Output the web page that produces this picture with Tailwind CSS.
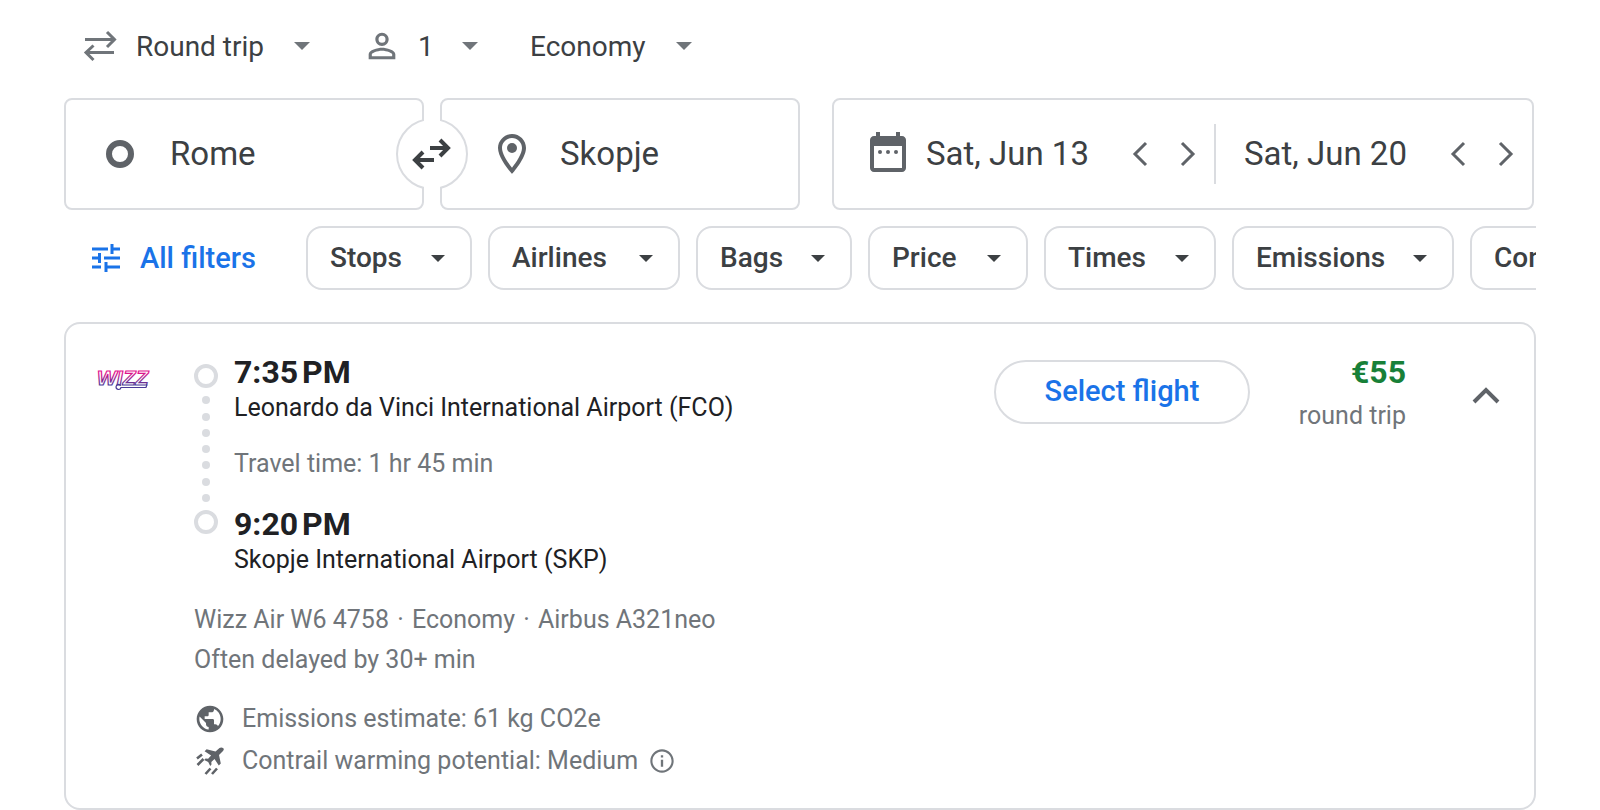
<!DOCTYPE html>
<html lang="en">
<head>
<meta charset="utf-8">
<meta name="viewport" content="width=device-width, initial-scale=1">
<title>Flights from Rome to Skopje</title>
<script src="https://cdn.jsdelivr.net/npm/@tailwindcss/browser@4"></script>
</head>
<body class="bg-white font-['Roboto',sans-serif] text-[#3c4043]">
<main class="px-16 pt-[22px]">
  <form>
    <div class="flex h-12 items-center pl-4 text-[28px] leading-12">
      <label for="trip" aria-label="Trip type" class="mr-4">
        <svg class="size-10" viewBox="0 0 40 40" fill="none" stroke="#70757a" stroke-width="3"><path d="M5 13.500H34M27 6l7.500 7.500L27 21M34 26.500H6M13.500 19.500L6 26.500l7.500 7.500"/></svg>
      </label>
      <div class="relative mr-[52px] w-[174px]">
        <select id="trip" class="block w-full appearance-none pt-0.5 outline-none"><option>Round trip</option><option>One way</option></select>
        <svg class="pointer-events-none absolute top-[21px] right-0 h-2 w-4" viewBox="0 0 16 8" fill="#70757a"><path d="M0 0h16L8 8z"/></svg>
      </div>
      <label for="passengers" aria-label="Passengers" class="mr-4">
        <svg class="size-10" viewBox="0 0 24 24" fill="#70757a"><path d="M12 5.900a2.100 2.100 0 1 1 0 4.200 2.100 2.100 0 0 1 0-4.200m0 9c2.970 0 6.100 1.460 6.100 2.100v1.100H5.900V17c0-.64 3.130-2.100 6.100-2.100M12 4C9.790 4 8 5.790 8 8s1.790 4 4 4 4-1.790 4-4-1.790-4-4-4m0 9c-2.670 0-8 1.340-8 4v3h16v-3c0-2.660-5.330-4-8-4"/></svg>
      </label>
      <div class="relative mr-[52px] w-[60px]">
        <select id="passengers" class="block w-full appearance-none pt-0.5 outline-none"><option>1</option><option>2</option></select>
        <svg class="pointer-events-none absolute top-[21px] right-0 h-2 w-4" viewBox="0 0 16 8" fill="#70757a"><path d="M0 0h16L8 8z"/></svg>
      </div>
      <div class="relative w-[162px]">
        <select aria-label="Seating class" class="block w-full appearance-none pt-0.5 outline-none"><option>Economy</option><option>Business</option></select>
        <svg class="pointer-events-none absolute top-[21px] right-0 h-2 w-4" viewBox="0 0 16 8" fill="#70757a"><path d="M0 0h16L8 8z"/></svg>
      </div>
    </div>

    <div class="mt-7 grid grid-cols-[736fr_702fr] gap-8 pr-0.5 text-[33px]">
      <div class="relative grid grid-cols-2 gap-4">
        <div class="flex h-28 items-center rounded-lg border-2 border-[#dadce0] pl-10">
          <span class="size-7 shrink-0 rounded-full border-[6px] border-[#5f6368]"></span>
          <input aria-label="Where from?" value="Rome" class="ml-9 w-full min-w-0 pr-10 outline-none">
        </div>
        <div class="flex h-28 items-center rounded-lg border-2 border-[#dadce0] pl-[46px]">
          <svg class="size-12 shrink-0" viewBox="0 0 24 24" fill="#5f6368"><path d="M12 2C8.130 2 5 5.130 5 9c0 5.250 7 13 7 13s7-7.750 7-13c0-3.870-3.130-7-7-7M7 9c0-2.760 2.240-5 5-5s5 2.240 5 5c0 2.880-2.880 7.190-5 9.880C9.920 16.210 7 11.850 7 9"/><circle cx="12" cy="9" r="2.500"/></svg>
          <input aria-label="Where to?" value="Skopje" class="ml-6 w-full min-w-0 pr-4 outline-none">
        </div>
        <button type="button" aria-label="Swap origin and destination" class="absolute top-1/2 left-1/2 flex size-[72px] -translate-1/2 items-center justify-center rounded-full border-2 border-[#dadce0] bg-white before:absolute before:inset-y-[-2px] before:left-[26px] before:w-4 before:bg-white">
          <svg class="relative size-12 shrink-0" viewBox="0 0 48 48" fill="none" stroke="#3c4043" stroke-width="4"><path d="M22 18h18M32 10l8 8-8 8M26 30H7M15 22l-8 8 8 8"/></svg>
        </button>
      </div>

      <div class="grid h-28 grid-cols-[380fr_318fr] rounded-lg border-2 border-[#dadce0]">
        <div class="flex items-center pl-[30px]">
          <svg class="mb-1 size-12 shrink-0" viewBox="0 0 24 24" fill="#5f6368"><path fill-rule="evenodd" d="M19 4h-1V2h-2v2H8V2H6v2H5c-1.100 0-2 .9-2 2v14c0 1.100.9 2 2 2h14c1.100 0 2-.9 2-2V6c0-1.100-.9-2-2-2M5 9h14v11H5z"/><circle cx="8" cy="12" r="1"/><circle cx="12" cy="12" r="1"/><circle cx="16" cy="12" r="1"/></svg>
          <input aria-label="Departure" value="Sat, Jun 13" class="ml-3.5 w-full min-w-0 outline-none">
          <button type="button" aria-label="Earlier departure" class="flex size-12 shrink-0 items-center justify-center"><svg class="size-7" viewBox="0 0 28 28" fill="none" stroke="#5f6368" stroke-width="3"><path d="M20 3L9 14l11 11"/></svg></button>
          <button type="button" aria-label="Later departure" class="mr-0.5 flex size-12 shrink-0 items-center justify-center"><svg class="size-7" viewBox="0 0 28 28" fill="none" stroke="#5f6368" stroke-width="3"><path d="M8 3l11 11L8 25"/></svg></button>
        </div>
        <div class="flex items-center pr-0.5">
          <span class="h-15 w-0.5 shrink-0 bg-[#dadce0]"></span>
          <input aria-label="Return" value="Sat, Jun 20" class="ml-7 w-full min-w-0 outline-none">
          <button type="button" aria-label="Earlier return" class="flex size-12 shrink-0 items-center justify-center"><svg class="size-7" viewBox="0 0 28 28" fill="none" stroke="#5f6368" stroke-width="3"><path d="M20 3L9 14l11 11"/></svg></button>
          <button type="button" aria-label="Later return" class="flex size-12 shrink-0 items-center justify-center"><svg class="size-7" viewBox="0 0 28 28" fill="none" stroke="#5f6368" stroke-width="3"><path d="M8 3l11 11L8 25"/></svg></button>
        </div>
      </div>
    </div>
  </form>

  <div class="mt-4 flex gap-4 overflow-hidden text-[28px] leading-10 font-medium">
    <button class="flex h-16 w-[226px] shrink-0 items-center gap-4 pl-6 text-[29px] text-[#1a73e8]">
      <svg class="size-9" viewBox="0 0 36 36" fill="none" stroke="#1a73e8" stroke-width="3"><path d="M4 9h16M24 9h8M24 4v10M4 18h8M11.500 13v10M16 18h16M4 27h9M18 22v10M18 27h14"/></svg>
      All filters
    </button>
    <button class="flex h-16 w-[166px] shrink-0 items-center justify-between rounded-2xl border-2 border-[#dadce0] pr-[25px] pl-[22px]">Stops<svg class="h-[7px] w-3.5" viewBox="0 0 14 7" fill="#3c4043"><path d="M0 0h14L7 7z"/></svg></button>
    <button class="flex h-16 w-[192px] shrink-0 items-center justify-between rounded-2xl border-2 border-[#dadce0] pr-[25px] pl-[22px]">Airlines<svg class="h-[7px] w-3.5" viewBox="0 0 14 7" fill="#3c4043"><path d="M0 0h14L7 7z"/></svg></button>
    <button class="flex h-16 w-[156px] shrink-0 items-center justify-between rounded-2xl border-2 border-[#dadce0] pr-[25px] pl-[22px]">Bags<svg class="h-[7px] w-3.5" viewBox="0 0 14 7" fill="#3c4043"><path d="M0 0h14L7 7z"/></svg></button>
    <button class="flex h-16 w-[160px] shrink-0 items-center justify-between rounded-2xl border-2 border-[#dadce0] pr-[25px] pl-[22px]">Price<svg class="h-[7px] w-3.5" viewBox="0 0 14 7" fill="#3c4043"><path d="M0 0h14L7 7z"/></svg></button>
    <button class="flex h-16 w-[172px] shrink-0 items-center justify-between rounded-2xl border-2 border-[#dadce0] pr-[25px] pl-[22px]">Times<svg class="h-[7px] w-3.5" viewBox="0 0 14 7" fill="#3c4043"><path d="M0 0h14L7 7z"/></svg></button>
    <button class="flex h-16 w-[222px] shrink-0 items-center justify-between rounded-2xl border-2 border-[#dadce0] pr-[25px] pl-[22px]">Emissions<svg class="h-[7px] w-3.5" viewBox="0 0 14 7" fill="#3c4043"><path d="M0 0h14L7 7z"/></svg></button>
    <button class="flex h-16 w-[320px] shrink-0 items-center justify-between rounded-2xl border-2 border-[#dadce0] pr-[25px] pl-[22px]">Connecting airports<svg class="h-[7px] w-3.5" viewBox="0 0 14 7" fill="#3c4043"><path d="M0 0h14L7 7z"/></svg></button>
  </div>

  <article class="mt-8 flex items-start rounded-2xl border-2 border-[#dadce0] pt-7 pb-[26px] pl-[30px] text-[25px] text-[#70757a]">
    <svg class="mt-2.5 h-8 w-14 shrink-0" viewBox="0 0 56 32" role="img" aria-label="Wizz Air">
      <defs><linearGradient id="wizz" gradientUnits="userSpaceOnUse" x1="0" y1="4" x2="0" y2="28"><stop offset=".3" stop-color="#e0148c"/><stop offset=".85" stop-color="#3a3a96"/></linearGradient></defs>
      <text x="1" y="23" font-family="Liberation Sans" font-size="21" font-weight="700" font-style="italic" fill="#fff" stroke="url(#wizz)" stroke-width="1.200">WIZZ</text>
      <path d="M25 23.500l-2-1a2.500 2.500 0 1 0 2 3h25l1-3" fill="none" stroke="#4a3a96" stroke-width="1.200"/>
    </svg>
    <div class="ml-[42px] min-w-0 flex-1">
      <div class="flex gap-4">
        <div class="flex flex-col items-center justify-between pt-3 pb-[42px]">
          <span class="size-6 rounded-full border-4 border-[#dadce0]"></span>
          <span class="size-2 rounded-full bg-[#dadce0]"></span>
          <span class="size-2 rounded-full bg-[#dadce0]"></span>
          <span class="size-2 rounded-full bg-[#dadce0]"></span>
          <span class="size-2 rounded-full bg-[#dadce0]"></span>
          <span class="size-2 rounded-full bg-[#dadce0]"></span>
          <span class="size-2 rounded-full bg-[#dadce0]"></span>
          <span class="size-2 rounded-full bg-[#dadce0]"></span>
          <span class="size-6 rounded-full border-4 border-[#dadce0]"></span>
        </div>
        <div class="text-[#202124]">
          <h2 class="text-[32px] leading-10 font-bold">7:35&#8239;PM</h2>
          <p class="leading-8">Leonardo da Vinci International Airport (FCO)</p>
          <p class="my-6 leading-8 text-[#70757a]">Travel time: 1 hr 45 min</p>
          <h2 class="text-[32px] leading-10 font-bold">9:20&#8239;PM</h2>
          <p class="leading-8">Skopje International Airport (SKP)</p>
        </div>
      </div>
      <p class="mt-6 leading-10">Wizz Air W6 4758 <span class="mx-0.5">·</span> Economy <span class="mx-0.5">·</span> Airbus A321neo</p>
      <p class="leading-10">Often delayed by 30+ min</p>
      <p class="mt-[18px] flex h-[42px] items-center gap-4">
        <svg class="size-8 shrink-0" viewBox="0 0 24 24" fill="#5f6368"><path d="M12 2C6.480 2 2 6.480 2 12s4.480 10 10 10 10-4.480 10-10S17.520 2 12 2m-1 17.930c-3.950-.49-7-3.850-7-7.930 0-.62.080-1.210.21-1.790L9 15v1c0 1.100.9 2 2 2zm6.900-2.540c-.26-.81-1-1.390-1.900-1.390h-1v-3c0-.55-.45-1-1-1H8v-2h2c.55 0 1-.45 1-1V7h2c1.100 0 2-.9 2-2v-.41c2.930 1.190 5 4.060 5 7.410 0 2.080-.8 3.970-2.100 5.390"/></svg>
        Emissions estimate: 61 kg CO2e
      </p>
      <p class="flex h-[42px] items-center gap-4">
        <svg class="size-8 shrink-0" viewBox="0 0 32 32" fill="#5f6368"><path d="M29.300 3.200c.9.900.5 2-.3 2.800L25 10l1.800 8.500-2 2L20.500 14l-3.200 3 .2 2.600-1.300 1.300-2-4-4-2 1.300-1.300 2.600.2 3-3.200-6.500-4.300 2-2 8.900 2.300 4-3.600c.9-.8 2.900-.7 3.800.2"/><path d="M3 13.500l5-4M3.500 20l6-6M11.500 29l5-5.500M18 29l5-5.500" fill="none" stroke="#5f6368" stroke-width="2.600"/></svg>
        Contrail warming potential: Medium
        <button type="button" aria-label="About contrail warming potential" class="-ml-1.5"><svg class="block size-7" viewBox="0 0 24 24" fill="#70757a"><path d="M11 7h2v2h-2zm0 4h2v6h-2zm1-9C6.480 2 2 6.480 2 12s4.480 10 10 10 10-4.480 10-10S17.520 2 12 2m0 18.200c-4.500 0-8.200-3.700-8.200-8.200S7.500 3.800 12 3.800s8.200 3.700 8.200 8.200-3.700 8.200-8.200 8.200"/></svg></button>
      </p>
    </div>
    <button class="mt-2 h-16 w-64 shrink-0 rounded-full border-2 border-[#dadce0] text-[29px] font-medium text-[#1a73e8]">Select flight</button>
    <div class="w-[156px] shrink-0 text-right">
      <p class="text-[32px] leading-10 font-bold text-[#188038]">€55</p>
      <p class="mt-2 leading-8">round trip</p>
    </div>
    <button aria-label="Hide flight details" aria-expanded="true" class="mt-5 mr-6 ml-14 flex size-12 shrink-0 items-center justify-center"><svg class="size-8" viewBox="0 0 32 32" fill="none" stroke="#5f6368" stroke-width="4"><path d="M4 22L16 10l12 12"/></svg></button>
  </article>
</main>
</body>
</html>
